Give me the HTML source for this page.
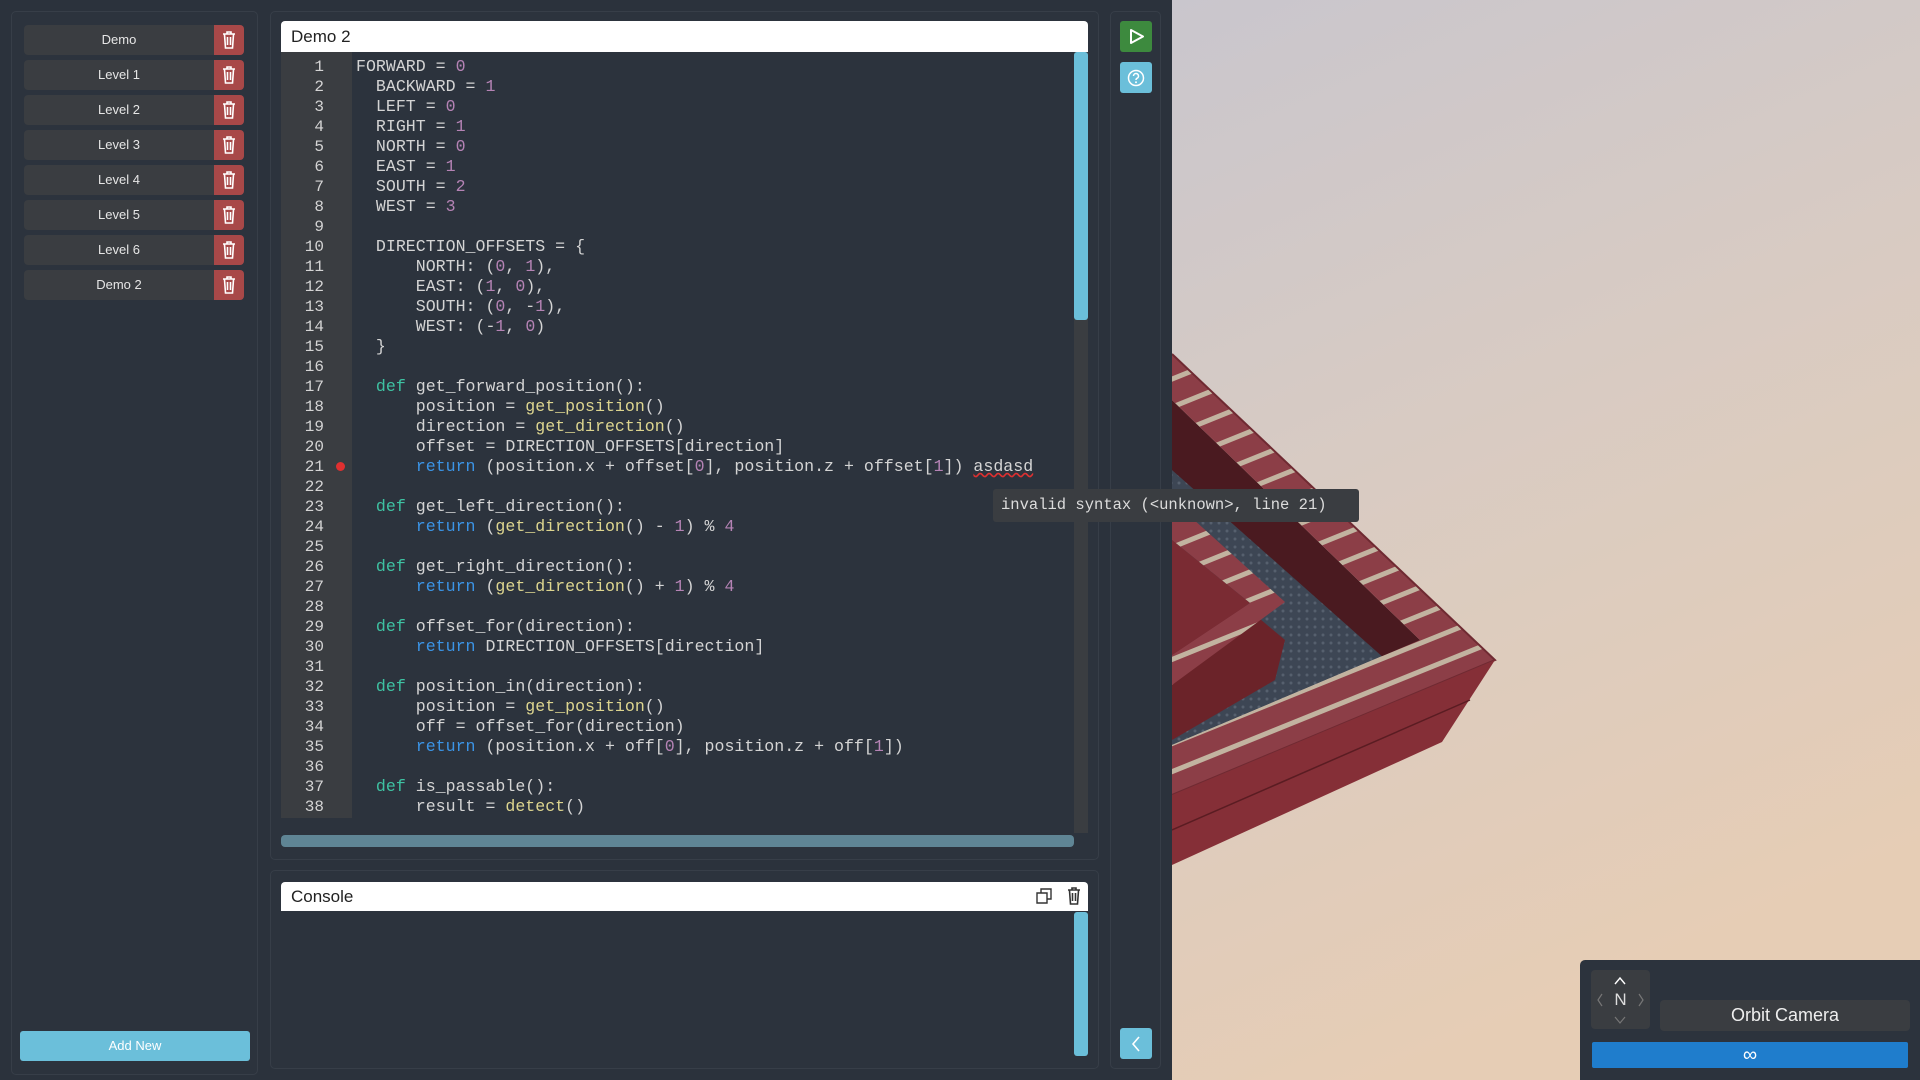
<!DOCTYPE html>
<html><head><meta charset="utf-8"><style>
*{box-sizing:border-box;margin:0;padding:0}
body{width:1920px;height:1080px;overflow:hidden;background:#2b323c;font-family:"Liberation Sans",sans-serif;position:relative}
.abs{position:absolute}
.panel{position:absolute;background:#2c333d;border:1px solid #373e48;border-radius:5px}
.item{position:absolute;left:24px;width:220px;height:30px;background:#3a3d41;border-radius:4px;color:#e6e6e6;font-size:13px;line-height:30px}
.item span{position:absolute;left:0;width:190px;text-align:center}
.item .tr{position:absolute;right:0;top:0;width:30px;height:30px;background:#a84848;border-radius:0 4px 4px 0}
.item .tr svg{position:absolute;left:8px;top:6px}
.code{position:absolute;left:356px;top:57px;font-family:"Liberation Mono",monospace;font-size:16.6px;line-height:20px;color:#d4d4d4;white-space:pre}
.gut{position:absolute;left:281px;top:52px;width:71px;height:766px;background:#3a3d41}
.nums{position:absolute;left:281px;top:57px;width:43px;text-align:right;font-family:"Liberation Mono",monospace;font-size:16px;line-height:20px;color:#d4d4d4;white-space:pre}
.k{color:#3ec2a2}.r{color:#3b94e6}.f{color:#ddd58f}.n{color:#b583b5}
</style></head><body>
<!-- 3D scene -->
<svg class="abs" style="left:1172px;top:0" width="748" height="1080" viewBox="1172 0 748 1080">
<defs>
<linearGradient id="sky" x1="0" y1="0" x2="0.3" y2="1">
<stop offset="0" stop-color="#c9c6cd"/><stop offset="0.45" stop-color="#d8cbc3"/><stop offset="1" stop-color="#e6cdb5"/></linearGradient>
<pattern id="st" width="26" height="26" patternUnits="userSpaceOnUse" patternTransform="rotate(-22)">
<rect width="26" height="26" fill="#8c3e47"/><rect y="8" width="26" height="5" fill="#c2b3a0"/></pattern>
<pattern id="stone" width="8" height="8" patternUnits="userSpaceOnUse"><rect width="8" height="8" fill="#3d4654"/><circle cx="3" cy="3" r="1.5" fill="#56606e"/></pattern>
</defs>
<rect x="1172" y="0" width="748" height="1080" fill="url(#sky)"/>
<polygon points="1172,440 1420,640 1172,745" fill="url(#stone)"/>
<polygon points="1172,400 1420,640 1420,690 1172,470" fill="#4a1a20"/>
<polygon points="1172,545 1285,640 1275,680 1172,740" fill="#6b2329"/>
<polygon points="1172,500 1285,602 1172,685 1172,655 1250,603 1172,540" fill="url(#st)"/>
<polygon points="1172,540 1250,603 1172,655" fill="#7a2b33"/>
<polygon points="1172,354 1495,660 1172,795 1172,745 1420,640 1172,400" fill="url(#st)"/>
<polyline points="1172,354 1495,660 1172,795" fill="none" stroke="#6f2a32" stroke-width="2"/>
<polygon points="1172,795 1495,660 1442,742 1172,865" fill="#852f37"/>
<line x1="1172" y1="830" x2="1470" y2="700" stroke="#5a1c22" stroke-width="1.5"/>
</svg>

<!-- left sidebar -->
<div class="panel" style="left:11px;top:11px;width:247px;height:1064px"></div>
<div class="item" style="top:25px"><span>Demo</span><div class="tr"><svg width="14" height="18" viewBox="0 0 14 18"><path d="M1 3h12M5 3V1h4v2M2.5 3.5l1 13.5h7l1-13.5M5.5 6v8M8.5 6v8" fill="none" stroke="#fff" stroke-width="1.6"/></svg></div></div>
<div class="item" style="top:60px"><span>Level 1</span><div class="tr"><svg width="14" height="18" viewBox="0 0 14 18"><path d="M1 3h12M5 3V1h4v2M2.5 3.5l1 13.5h7l1-13.5M5.5 6v8M8.5 6v8" fill="none" stroke="#fff" stroke-width="1.6"/></svg></div></div>
<div class="item" style="top:95px"><span>Level 2</span><div class="tr"><svg width="14" height="18" viewBox="0 0 14 18"><path d="M1 3h12M5 3V1h4v2M2.5 3.5l1 13.5h7l1-13.5M5.5 6v8M8.5 6v8" fill="none" stroke="#fff" stroke-width="1.6"/></svg></div></div>
<div class="item" style="top:130px"><span>Level 3</span><div class="tr"><svg width="14" height="18" viewBox="0 0 14 18"><path d="M1 3h12M5 3V1h4v2M2.5 3.5l1 13.5h7l1-13.5M5.5 6v8M8.5 6v8" fill="none" stroke="#fff" stroke-width="1.6"/></svg></div></div>
<div class="item" style="top:165px"><span>Level 4</span><div class="tr"><svg width="14" height="18" viewBox="0 0 14 18"><path d="M1 3h12M5 3V1h4v2M2.5 3.5l1 13.5h7l1-13.5M5.5 6v8M8.5 6v8" fill="none" stroke="#fff" stroke-width="1.6"/></svg></div></div>
<div class="item" style="top:200px"><span>Level 5</span><div class="tr"><svg width="14" height="18" viewBox="0 0 14 18"><path d="M1 3h12M5 3V1h4v2M2.5 3.5l1 13.5h7l1-13.5M5.5 6v8M8.5 6v8" fill="none" stroke="#fff" stroke-width="1.6"/></svg></div></div>
<div class="item" style="top:235px"><span>Level 6</span><div class="tr"><svg width="14" height="18" viewBox="0 0 14 18"><path d="M1 3h12M5 3V1h4v2M2.5 3.5l1 13.5h7l1-13.5M5.5 6v8M8.5 6v8" fill="none" stroke="#fff" stroke-width="1.6"/></svg></div></div>
<div class="item" style="top:270px"><span>Demo 2</span><div class="tr"><svg width="14" height="18" viewBox="0 0 14 18"><path d="M1 3h12M5 3V1h4v2M2.5 3.5l1 13.5h7l1-13.5M5.5 6v8M8.5 6v8" fill="none" stroke="#fff" stroke-width="1.6"/></svg></div></div>
<div class="abs" style="left:20px;top:1031px;width:230px;height:30px;background:#6bbfda;border-radius:3px;color:#fff;font-size:13px;line-height:30px;text-align:center">Add New</div>

<!-- editor -->
<div class="panel" style="left:270px;top:11px;width:829px;height:849px"></div>
<div class="abs" style="left:281px;top:21px;width:807px;height:31px;background:#fff;border-radius:4px 4px 0 0;font-size:17px;line-height:31px;padding-left:10px;color:#222">Demo 2</div>
<div class="gut"></div>
<div class="nums">1
2
3
4
5
6
7
8
9
10
11
12
13
14
15
16
17
18
19
20
21
22
23
24
25
26
27
28
29
30
31
32
33
34
35
36
37
38</div>
<div class="abs" style="left:336px;top:462px;width:9px;height:9px;border-radius:50%;background:#e03030"></div>
<div class="code">FORWARD = <span class="n">0</span>
  BACKWARD = <span class="n">1</span>
  LEFT = <span class="n">0</span>
  RIGHT = <span class="n">1</span>
  NORTH = <span class="n">0</span>
  EAST = <span class="n">1</span>
  SOUTH = <span class="n">2</span>
  WEST = <span class="n">3</span>

  DIRECTION_OFFSETS = {
      NORTH: (<span class="n">0</span>, <span class="n">1</span>),
      EAST: (<span class="n">1</span>, <span class="n">0</span>),
      SOUTH: (<span class="n">0</span>, -<span class="n">1</span>),
      WEST: (-<span class="n">1</span>, <span class="n">0</span>)
  }

  <span class="k">def</span> get_forward_position():
      position = <span class="f">get_position</span>()
      direction = <span class="f">get_direction</span>()
      offset = DIRECTION_OFFSETS[direction]
      <span class="r">return</span> (position.x + offset[<span class="n">0</span>], position.z + offset[<span class="n">1</span>]) <span style="text-decoration:underline wavy #e03030">asdasd</span>

  <span class="k">def</span> get_left_direction():
      <span class="r">return</span> (<span class="f">get_direction</span>() - <span class="n">1</span>) % <span class="n">4</span>

  <span class="k">def</span> get_right_direction():
      <span class="r">return</span> (<span class="f">get_direction</span>() + <span class="n">1</span>) % <span class="n">4</span>

  <span class="k">def</span> offset_for(direction):
      <span class="r">return</span> DIRECTION_OFFSETS[direction]

  <span class="k">def</span> position_in(direction):
      position = <span class="f">get_position</span>()
      off = offset_for(direction)
      <span class="r">return</span> (position.x + off[<span class="n">0</span>], position.z + off[<span class="n">1</span>])

  <span class="k">def</span> is_passable():
      result = <span class="f">detect</span>()</div>
<div class="abs" style="left:1074px;top:52px;width:14px;height:781px;background:#3a3d41"></div>
<div class="abs" style="left:1074px;top:52px;width:14px;height:268px;background:#6bbfda;border-radius:3px"></div>
<div class="abs" style="left:281px;top:835px;width:793px;height:12px;background:#5f8595;border-radius:4px"></div>

<!-- console -->
<div class="panel" style="left:270px;top:870px;width:829px;height:199px"></div>
<div class="abs" style="left:281px;top:882px;width:807px;height:29px;background:#fff;border-radius:4px 4px 0 0;font-size:17px;line-height:29px;padding-left:10px;color:#222">Console</div>
<svg class="abs" style="left:1036px;top:888px" width="16" height="16" viewBox="0 0 16 16"><path d="M1 5h10v10H1zM5 5V1h10v10h-4" fill="none" stroke="#333" stroke-width="1.4"/></svg>
<svg class="abs" style="left:1067px;top:887px" width="14" height="18" viewBox="0 0 14 18"><path d="M1 3h12M5 3V1h4v2M2.5 3.5l1 13.5h7l1-13.5M5.5 6v8M8.5 6v8" fill="none" stroke="#333" stroke-width="1.6"/></svg>
<div class="abs" style="left:1074px;top:912px;width:14px;height:144px;background:#6bbfda;border-radius:3px"></div>

<!-- toolbar -->
<div class="panel" style="left:1110px;top:11px;width:51px;height:1058px"></div>
<div class="abs" style="left:1120px;top:21px;width:32px;height:31px;background:#3d8a3e;border-radius:3px"><svg style="position:absolute;left:8px;top:7px" width="17" height="17" viewBox="0 0 17 17"><path d="M3 2l12 6.5L3 15z" fill="none" stroke="#fff" stroke-width="2" stroke-linejoin="round"/></svg></div>
<div class="abs" style="left:1120px;top:62px;width:32px;height:31px;background:#6bbfda;border-radius:3px"><svg style="position:absolute;left:7px;top:7px" width="18" height="18" viewBox="0 0 18 18"><circle cx="9" cy="9" r="7.5" fill="none" stroke="#fff" stroke-width="1.5"/><path d="M6.5 7a2.5 2.5 0 1 1 3.5 2.3c-.8.4-1 .9-1 1.7" fill="none" stroke="#fff" stroke-width="1.5"/><circle cx="9" cy="13.3" r="1" fill="#fff"/></svg></div>
<div class="abs" style="left:1120px;top:1028px;width:32px;height:31px;background:#6bbfda;border-radius:3px"><svg style="position:absolute;left:10px;top:8px" width="12" height="16" viewBox="0 0 12 16"><path d="M9 1L3 8l6 7" fill="none" stroke="#fff" stroke-width="1.6"/></svg></div>

<!-- tooltip -->
<div class="abs" style="left:993px;top:489px;width:366px;height:33px;background:#3a3d41;border-radius:3px;color:#dcdcdc;font-family:'Liberation Mono',monospace;font-size:15.5px;line-height:33px;padding-left:8px;white-space:pre;z-index:5">invalid syntax (&lt;unknown&gt;, line 21)</div>

<!-- camera panel -->
<div class="abs" style="left:1580px;top:960px;width:340px;height:120px;background:#2c333d;border-radius:5px 0 0 0"></div>
<div class="abs" style="left:1591px;top:970px;width:59px;height:59px;background:#3a3d41;border-radius:4px;color:#ddd;font-size:17px;text-align:center;line-height:59px">N
<svg style="position:absolute;left:22px;top:6px" width="14" height="10"><path d="M2 8l5-6 5 6" fill="none" stroke="#fff" stroke-width="1.4"/></svg>
<svg style="position:absolute;left:22px;top:45px" width="14" height="10"><path d="M2 2l5 6 5-6" fill="none" stroke="#777" stroke-width="1.2"/></svg>
<svg style="position:absolute;left:4px;top:22px" width="10" height="16"><path d="M7 2L3 8l4 6" fill="none" stroke="#777" stroke-width="1.2"/></svg>
<svg style="position:absolute;left:45px;top:22px" width="10" height="16"><path d="M3 2l4 6-4 6" fill="none" stroke="#777" stroke-width="1.2"/></svg></div>
<div class="abs" style="left:1660px;top:1000px;width:250px;height:31px;background:#3a3d41;border-radius:4px;color:#eee;font-size:18px;line-height:31px;text-align:center">Orbit Camera</div>
<div class="abs" style="left:1592px;top:1042px;width:316px;height:26px;background:#1f7dcc;border-radius:2px;color:#fff;font-size:20px;line-height:26px;text-align:center">∞</div>
</body></html>
